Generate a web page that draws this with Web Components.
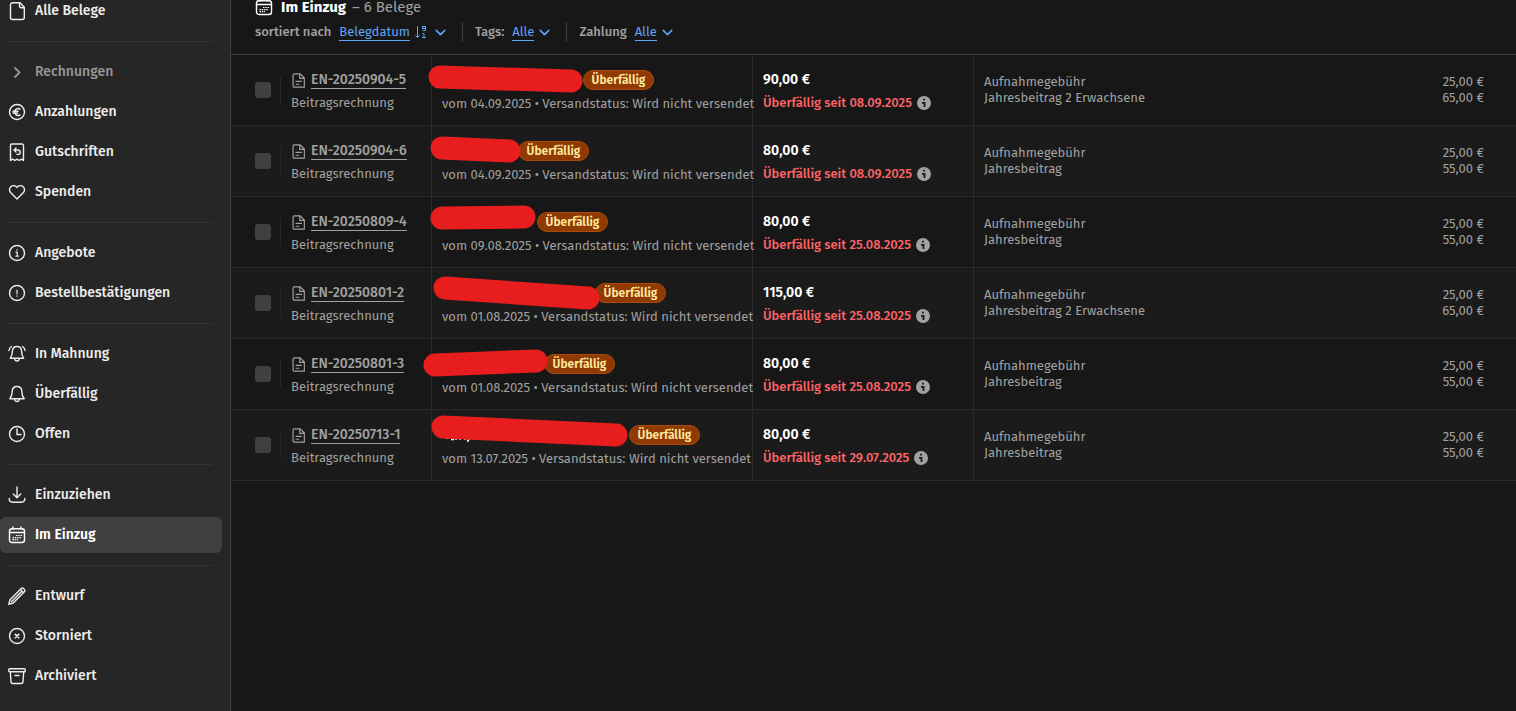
<!DOCTYPE html>
<html lang="de">
<head>
<meta charset="utf-8">
<title>Im Einzug – Belege</title>
<style>
  html, body { margin: 0; height: 100%; }
  body {
    background: #171717; color: #a1a1a1; overflow: hidden;
    font: 13px/16px "Fira Sans", Roboto, "Noto Sans", sans-serif;
  }
</style>
</head>
<body>
<belege-app></belege-app>
<script>
const make = (el, html) => { el.attachShadow({ mode: 'open' }).innerHTML = html; return el.shadowRoot; };

const ICONS = {
  file: '<path d="M5.500 .8H12l4.300 4.500v10.200a2 2 0 0 1-2 2H4.500a2 2 0 0 1-2-2V2.800a2 2 0 0 1 2-2zM11.500 .8v3a2 2 0 0 0 2 2h2.800"/>',
  chevron: '<path stroke-width="1.8" d="M7 5l4.500 4.500L7 14"/>',
  euro: '<circle cx="9" cy="9" r="7.500"/><path d="M12 6.200a3.400 3.400 0 1 0 0 5.600M5 8.200h5M5 10h4.500"/>',
  credit: '<path d="M2.500 2.500A1.500 1.500 0 0 1 4 1h10a1.500 1.500 0 0 1 1.500 1.500v15l-2.200-1.400-2.100 1.400L9 16.100l-2.200 1.400-2.100-1.400-2.200 1.400z"/><path d="M8 5L6 7l2 2M6 7h4a2.200 2.200 0 0 1 0 4.400H9"/>',
  heart: '<path d="M9 16L2.800 9.700a4 4 0 0 1 0-5.900 4 4 0 0 1 5.700 0l.5.6.5-.6a4 4 0 0 1 5.700 0 4 4 0 0 1 0 5.900z"/>',
  info: '<circle cx="9" cy="9" r="7.500"/><path stroke-width="1.2" d="M8 8.200h1.200v4M8 12.200h2.400M9 5.500v.6"/>',
  alert: '<circle cx="9" cy="9" r="7.500"/><path stroke-width="1.200" d="M9 6v3.800M9 11.800v.4"/>',
  bell: '<path d="M9 1.500c3 0 4.800 2.200 4.800 5 0 4 .8 5.300 2.400 7.300H1.800c1.600-2 2.400-3.300 2.400-7.300 0-2.800 1.800-5 4.800-5zM6.500 14c.2 1.700 1.200 2.500 2.500 2.500s2.300-.8 2.500-2.500"/>',
  ring: '<path d="M9 1.500c3 0 4.600 2.200 4.600 5 0 3.500.7 4.800 2.100 6.800H2.300c1.400-2 2.100-3.300 2.100-6.800 0-2.800 1.600-5 4.600-5zM6.500 13.500c.2 1.700 1.200 2.500 2.500 2.500s2.300-.8 2.500-2.500M3.400 1.500C2 2.500 1.200 3.800 1 5.500M14.600 1.500C16 2.500 16.800 3.800 17 5.500"/>',
  clock: '<circle cx="9" cy="9" r="7.500"/><path d="M9 4v5.500h4"/>',
  download: '<path d="M9 1v10.500M5.300 8L9 11.700 12.700 8M1.200 12.500c0 2.500 1 3.700 3.300 3.700h9c2.300 0 3.300-1.200 3.300-3.700"/>',
  calendar: '<rect x="1.500" y="2.700" width="15" height="13.800" rx="2.500"/><path d="M1.500 6.500h15M5 1v2M13 1v2"/><path stroke-width="1.200" stroke-linecap="butt" stroke-dasharray="1.500 .8" d="M8 9.500h6.200M4.500 11.700h8.500M4.500 13.700h5.500"/>',
  pencil: '<path d="M.8 17.200l1.200-4.400L13.200 1.600a1.700 1.700 0 0 1 2.400 0l.8.8a1.700 1.700 0 0 1 0 2.400L5.200 16zM12.600 2.800l2.600 2.600M3.600 14.400L13.600 4.400"/>',
  cancel: '<circle cx="9" cy="9" r="7.500"/><path stroke-width="1.700" d="M7.300 7.300l3.400 3.400M10.700 7.300l-3.400 3.400"/>',
  archive: '<rect x=".8" y="1.800" width="16.400" height="3" rx=".8"/><path d="M2.300 5l.7 9.500a2 2 0 0 0 2 2h8a2 2 0 0 0 2-2l.7-9.500M7 8.500h4"/>',
  doc: '<path d="M4 1h7l5 5v11H4a1.500 1.500 0 0 1-1.500-1.500v-13A1.500 1.500 0 0 1 4 1zM10.500 1v5.500H16M6 10h6.500M6 13.500h3.500"/>',
  down: '<path stroke-width="2.500" d="M2 5.500l7 7 7-7"/>',
};

/* <ui-icon name="…">: stroked 18×18 glyph in the current text colour */
customElements.define('ui-icon', class extends HTMLElement {
  connectedCallback() {
    if (this.shadowRoot) return;
    make(this, `<style>:host{display:inline-block;flex:none;width:18px;height:18px}svg{display:block;width:100%;height:100%;overflow:visible}</style>
      <svg viewBox="0 0 18 18" fill="none" stroke="currentColor" stroke-width="1.4" stroke-linejoin="round" stroke-linecap="round" aria-hidden="true">${ICONS[this.getAttribute('name')]}</svg>`);
  }
});

customElements.define('nav-item', class extends HTMLElement {
  connectedCallback() {
    make(this, `<style>
      :host{display:block;color:#ededed}
      :host([muted]){color:#979797}
      a{display:flex;align-items:center;gap:9px;height:36px;margin:2px 8px 2px 0;padding-left:8px;border-radius:6px;
        color:inherit;text-decoration:none;font-size:14px;font-weight:500}
      :host([active]) a{background:#404040;color:#fff;font-weight:600}
      </style><a href="#"><ui-icon name="${this.getAttribute('icon')}"></ui-icon><slot></slot></a>`);
    if (this.hasAttribute('active')) this.shadowRoot.querySelector('a').setAttribute('aria-current', 'page');
  }
});

customElements.define('app-sidebar', class extends HTMLElement {
  connectedCallback() {
    make(this, `<style>
      :host{display:block;background:#262626;border-right:1px solid #404040;overflow:hidden}
      nav{display:flex;flex-direction:column;margin-top:-9px}
      nav-item{display:flow-root}
      hr{box-sizing:border-box;height:1px;border:0;border-top:1px solid #333;margin:10px 18px 10px 8px}
      </style><nav aria-label="Belege">
      <nav-item icon="file">Alle Belege</nav-item><hr>
      <nav-item icon="chevron" muted>Rechnungen</nav-item>
      <nav-item icon="euro">Anzahlungen</nav-item>
      <nav-item icon="credit">Gutschriften</nav-item>
      <nav-item icon="heart">Spenden</nav-item><hr>
      <nav-item icon="info">Angebote</nav-item>
      <nav-item icon="alert">Bestellbestätigungen</nav-item><hr>
      <nav-item icon="ring">In Mahnung</nav-item>
      <nav-item icon="bell">Überfällig</nav-item>
      <nav-item icon="clock">Offen</nav-item><hr>
      <nav-item icon="download">Einzuziehen</nav-item>
      <nav-item icon="calendar" active>Im Einzug</nav-item><hr>
      <nav-item icon="pencil">Entwurf</nav-item>
      <nav-item icon="cancel">Storniert</nav-item>
      <nav-item icon="archive">Archiviert</nav-item></nav>`);
  }
});

/* <filter-picker label="…" value="…" sort>: label with a drop-down trigger */
customElements.define('filter-picker', class extends HTMLElement {
  connectedCallback() {
    const sort = this.hasAttribute('sort')
      ? `<svg width="12" height="14" viewBox="0 0 12 14" fill="none" stroke="currentColor" aria-hidden="true"><path d="M2.500 1v11.500M.5 10.500l2 2 2-2"/><rect x="7.500" y="1.500" width="3" height="2"/><path d="M10.500 3v2.500h-3M7.500 8.500h1.500v4M7 12.500h4"/></svg>` : '';
    make(this, `<style>
      :host{display:flex;align-items:center;gap:8px;font-weight:500;color:#a1a1a1}
      button{all:unset;display:flex;align-items:center;gap:5px;color:#60a5fa;font-weight:400;cursor:pointer}
      span{border-bottom:1px solid currentColor}
      svg{margin-right:3px}
      ui-icon{width:11px;height:11px}
      </style><label for="b">${this.getAttribute('label')}</label>
      <button id="b" type="button" aria-haspopup="listbox"><span>${this.getAttribute('value')}</span>${sort}<ui-icon name="down"></ui-icon></button>`);
  }
});

customElements.define('list-header', class extends HTMLElement {
  connectedCallback() {
    make(this, `<style>
      :host{display:flow-root;height:54px;border-bottom:1px solid #404040;padding-left:24px}
      h1{display:flex;align-items:center;gap:8px;margin:-1px 0 0;font-size:15px;line-height:16px;font-weight:700;color:#fff}
      h1 small{font-size:15px;font-weight:400;color:#a1a1a1;margin-left:-2px}
      h1 ui-icon{margin:-2px 0}
      .bar{display:flex;align-items:center;margin-top:7px}
      i{width:1px;height:20px;background:#404040;margin:0 12px 0 16px}
      </style><h1><ui-icon name="calendar"></ui-icon>Im Einzug <small>– 6 Belege</small></h1>
      <div class="bar"><filter-picker label="sortiert nach" value="Belegdatum" sort></filter-picker><i></i>
      <filter-picker label="Tags:" value="Alle"></filter-picker><i></i>
      <filter-picker label="Zahlung" value="Alle"></filter-picker></div>`);
  }
});

customElements.define('status-badge', class extends HTMLElement {
  connectedCallback() {
    make(this, `<style>:host{display:inline-block;box-sizing:border-box;width:71px;height:20px;line-height:18px;text-align:center;
      border:1px solid #ad4b08;border-radius:10px;background:#8f3a02;color:#fee9a0;font-size:12px;font-weight:600}</style><slot></slot>`);
  }
});

/* <name-mask line="x1 y1 x2 y2">: thick marker stroke laid over the customer's name */
customElements.define('name-mask', class extends HTMLElement {
  connectedCallback() {
    const [x1, y1, x2, y2] = this.getAttribute('line').split(' ');
    const rest = this.hasAttribute('rest') ? '<path d="M14 28h3M19 29.500h3M24 29v1M28 29v1M33 29v1M37 28q0 3-2 3.500" stroke="#fff" stroke-width="1.500"/>' : '';
    make(this, `<style>:host{position:absolute;left:0;top:0;width:0;height:0}svg{display:block;overflow:visible}</style>
      <svg width="1" height="1" aria-hidden="true" fill="none">${rest}
      <path d="M${x1} ${y1}L${x2} ${y2}" stroke="#e81e1e" stroke-width="23" stroke-linecap="round"/></svg>`);
  }
});

customElements.define('info-dot', class extends HTMLElement {
  connectedCallback() {
    make(this, `<style>:host{display:inline-block;width:14px;height:14px}svg{display:block}</style>
      <svg width="14" height="14" viewBox="0 0 14 14" aria-hidden="true"><circle cx="7" cy="7" r="7" fill="#a1a1a1"/>
      <path d="M7 2.800v1.800M5 6.800h2.500v4.200" stroke="#171717" stroke-width="1.800" fill="none"/></svg>`);
  }
});

const ROWS = [
  ['EN-20250904-5', '04.09.2025', '90,00 €', '08.09.2025', 'Jahresbeitrag 2 Erwachsene', '65,00 €', 141, '8 22 139 26'],
  ['EN-20250904-6', '04.09.2025', '80,00 €', '08.09.2025', 'Jahresbeitrag', '55,00 €', 76, '10 22 77 25'],
  ['EN-20250809-4', '09.08.2025', '80,00 €', '25.08.2025', 'Jahresbeitrag', '55,00 €', 95, '10 21 92 20'],
  ['EN-20250801-2', '01.08.2025', '115,00 €', '25.08.2025', 'Jahresbeitrag 2 Erwachsene', '65,00 €', 153, '13 20 156 30'],
  ['EN-20250801-3', '01.08.2025', '80,00 €', '25.08.2025', 'Jahresbeitrag', '55,00 €', 102, '3 26 104 22'],
  ['EN-20250713-1', '13.07.2025', '80,00 €', '29.07.2025', 'Jahresbeitrag', '55,00 €', 187, '11 17 184 25'],
];

customElements.define('invoice-table', class extends HTMLElement {
  connectedCallback() {
    const rows = ROWS.map(([no, date, sum, due, item, price, name, line], i) => `<tr>
      <td><div class="pick"><input type="checkbox" aria-label="${no} auswählen"><i></i></div></td>
      <td class="line"><div class="two doc"><div><ui-icon name="doc"></ui-icon><a href="#">${no}</a></div><div>Beitragsrechnung</div></div></td>
      <td class="line client"><div class="two"><div><i class="name" style="width:${name}px"></i><status-badge>Überfällig</status-badge></div>
        <div>vom ${date} • Versandstatus: Wird nicht versendet</div></div><name-mask line="${line}"${i === 5 ? ' rest' : ''}></name-mask></td>
      <td class="line"><div class="two sum"><div><b>${sum}</b></div><div><strong>Überfällig seit ${due}</strong><info-dot></info-dot></div></div></td>
      <td><div class="item"><span>Aufnahmegebühr</span><span>25,00 €</span></div><div class="item"><span>${item}</span><span>${price}</span></div></td>
      </tr>`).join('');
    make(this, `<style>
      :host{display:block}
      table{width:100%;table-layout:fixed;border-collapse:separate;border-spacing:0}
      td{box-sizing:border-box;height:71px;padding:0;border-bottom:1px solid #2a2a2a}
      td.line{border-right:1px solid #2a2a2a}
      tr:nth-child(even){background:#1b1b1b}
      .pick{display:flex;align-items:center;padding-left:24px}
      .pick i{width:1px;height:28px;background:#262626;margin-left:9px}
      input{appearance:none;width:16px;height:16px;margin:0;background:#404040;border-radius:3px}
      .two{display:grid;grid-template-rows:24px 22px;align-items:center;padding:2px 0 0 10px;white-space:nowrap}
      .two>div{display:flex;align-items:center}
      .client{position:relative}
      .client .two{grid-template-rows:24px 24px;padding-top:4px}
      .name{flex:none}
      .doc a{font-size:14px;font-weight:500;color:#a1a1a1;text-decoration:none;border-bottom:1px solid currentColor}
      .doc ui-icon{width:15px;height:15px;margin-right:5px}
      b{font-size:14px;font-weight:600;color:#fff}
      strong{font-weight:500;color:#ff6467}
      info-dot{margin-left:5px}
      .item{display:flex;justify-content:space-between;padding:0 32px 0 10px}
      </style><table aria-label="Belege im Einzug"><colgroup><col style="width:50px"><col style="width:151px"><col style="width:321px"><col style="width:221px"><col></colgroup>
      <tbody>${rows}</tbody></table>`);
  }
});

customElements.define('belege-app', class extends HTMLElement {
  connectedCallback() {
    make(this, `<style>
      :host{display:grid;grid-template-columns:231px minmax(0,1fr);min-height:100vh}
      </style><app-sidebar></app-sidebar><main><list-header></list-header><invoice-table></invoice-table></main>`);
  }
});
</script>
</body>
</html>
